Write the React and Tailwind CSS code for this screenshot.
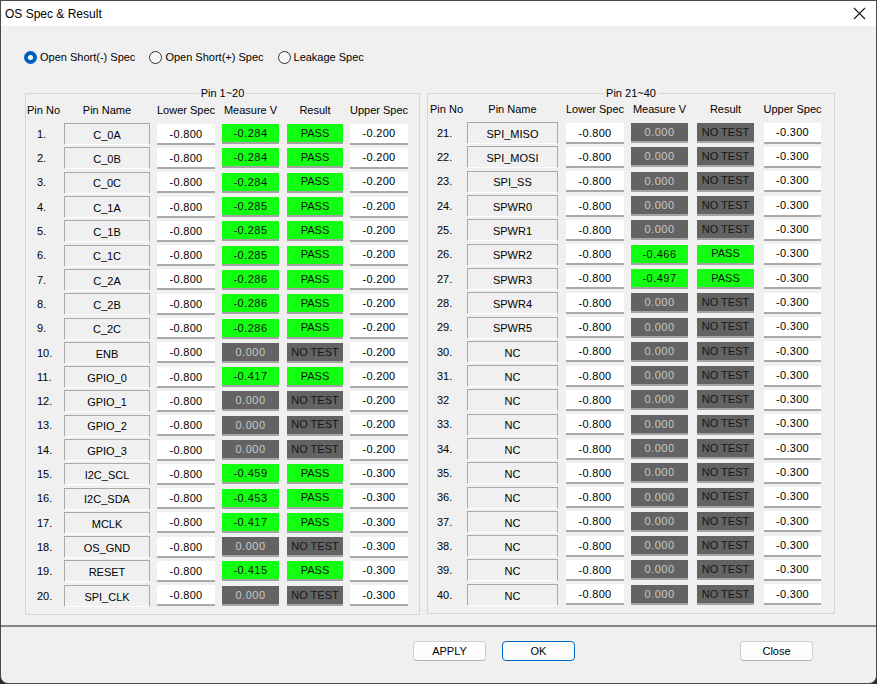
import React from "react";

const left = [
  ["1.", "C_0A", "-0.284", true, "-0.200"],
  ["2.", "C_0B", "-0.284", true, "-0.200"],
  ["3.", "C_0C", "-0.284", true, "-0.200"],
  ["4.", "C_1A", "-0.285", true, "-0.200"],
  ["5.", "C_1B", "-0.285", true, "-0.200"],
  ["6.", "C_1C", "-0.285", true, "-0.200"],
  ["7.", "C_2A", "-0.286", true, "-0.200"],
  ["8.", "C_2B", "-0.286", true, "-0.200"],
  ["9.", "C_2C", "-0.286", true, "-0.200"],
  ["10.", "ENB", "0.000", false, "-0.200"],
  ["11.", "GPIO_0", "-0.417", true, "-0.200"],
  ["12.", "GPIO_1", "0.000", false, "-0.200"],
  ["13.", "GPIO_2", "0.000", false, "-0.200"],
  ["14.", "GPIO_3", "0.000", false, "-0.200"],
  ["15.", "I2C_SCL", "-0.459", true, "-0.300"],
  ["16.", "I2C_SDA", "-0.453", true, "-0.300"],
  ["17.", "MCLK", "-0.417", true, "-0.300"],
  ["18.", "OS_GND", "0.000", false, "-0.300"],
  ["19.", "RESET", "-0.415", true, "-0.300"],
  ["20.", "SPI_CLK", "0.000", false, "-0.300"],
];

const right = [
  ["21.", "SPI_MISO", "0.000", false],
  ["22.", "SPI_MOSI", "0.000", false],
  ["23.", "SPI_SS", "0.000", false],
  ["24.", "SPWR0", "0.000", false],
  ["25.", "SPWR1", "0.000", false],
  ["26.", "SPWR2", "-0.466", true],
  ["27.", "SPWR3", "-0.497", true],
  ["28.", "SPWR4", "0.000", false],
  ["29.", "SPWR5", "0.000", false],
  ["30.", "NC", "0.000", false],
  ["31.", "NC", "0.000", false],
  ["32", "NC", "0.000", false],
  ["33.", "NC", "0.000", false],
  ["34.", "NC", "0.000", false],
  ["35.", "NC", "0.000", false],
  ["36.", "NC", "0.000", false],
  ["37.", "NC", "0.000", false],
  ["38.", "NC", "0.000", false],
  ["39.", "NC", "0.000", false],
  ["40.", "NC", "0.000", false],
].map((r) => [...r, "-0.300"]);

const leftCols = {
  headNo: "w-[38px] pl-px",
  no: "w-[38px] pl-[11px]",
  name: "w-[86px]",
  lower: "ml-[7px] w-[58px]",
  meas: "ml-[7px] w-[57px]",
  res: "ml-[8px] w-[56px]",
  upper: "ml-[7px] w-[58px]",
};

const rightCols = {
  headNo: "w-[39px] pl-[2px]",
  no: "w-[39px] pl-[9px]",
  name: "w-[91px]",
  lower: "ml-[8px] w-[58px]",
  meas: "ml-[7px] w-[57px]",
  res: "ml-[9px] w-[57px]",
  upper: "ml-[10px] w-[57px]",
};

function Radio({ checked, label }) {
  return (
    <div className="flex h-[14px] items-center">
      {checked ? (
        <span className="flex h-[13px] w-[13px] items-center justify-center rounded-full bg-[#0060c0]">
          <span className="h-[5px] w-[5px] rounded-full bg-white" />
        </span>
      ) : (
        <span className="h-[13px] w-[13px] rounded-full border border-[#333] bg-[#f8f8f8]" />
      )}
      <span className="ml-[3px] text-[11px] text-black">{label}</span>
    </div>
  );
}

function PinTable({ title, rows, cols, pt }) {
  return (
    <div className={`relative border border-[#d6d6d6] ${pt} pb-[6px]`}>
      <span className="absolute -top-[8px] left-0 right-0 flex justify-center">
        <span className="bg-[#f0f0f0] px-[2px] text-[11px] leading-[14px]">{title}</span>
      </span>
      <div className="flex h-[24px] items-center whitespace-nowrap text-[11px]">
        <div className={cols.headNo}>Pin No</div>
        <div className={`${cols.name} text-center`}>Pin Name</div>
        <div className={`${cols.lower} flex justify-center`}>Lower Spec</div>
        <div className={`${cols.meas} flex justify-center`}>Measure V</div>
        <div className={`${cols.res} flex justify-center`}>Result</div>
        <div className={`${cols.upper} flex justify-center`}>Upper Spec</div>
      </div>
      {rows.map(([no, name, meas, pass, upper]) => (
        <div key={no} className="flex h-[24.3px] items-center whitespace-nowrap text-[11px]">
          <div className={cols.no}>{no}</div>
          <div
            className={`${cols.name} flex h-[22px] items-center justify-center border border-[#a8a8a8] border-b-white bg-[#f0f0f0] pt-[2px]`}
          >
            {name}
          </div>
          <div className={`${cols.lower} flex h-[21px] items-start justify-center border-b-2 border-[#a9a9a9] bg-white pt-[2px] tracking-[0.3px]`}>
            -0.800
          </div>
          <div
            className={`${cols.meas} flex h-[20px] items-start justify-center border-b-2 border-[#a4a4a4] pt-[1px] tracking-[0.5px] ${
              pass ? "bg-[#12ff12] text-[#111]" : "bg-[#636363] text-[#c9c9c9]"
            }`}
          >
            {meas}
          </div>
          <div
            className={`${cols.res} flex h-[20px] items-center justify-center border-b-2 border-[#a4a4a4] ${
              pass ? "bg-[#12ff12] text-[#111]" : "bg-[#636363] text-[#161616]"
            }`}
          >
            {pass ? "PASS" : "NO TEST"}
          </div>
          <div className={`${cols.upper} flex h-[21px] items-center justify-center border-b-2 border-[#a9a9a9] bg-white tracking-[0.3px]`}>
            {upper}
          </div>
        </div>
      ))}
    </div>
  );
}

function Button({ label, primary }) {
  return (
    <button
      className={`flex h-[20px] w-[73px] items-center justify-center rounded-[4px] border bg-[#fdfdfd] text-[11px] text-black ${
        primary ? "border-[#0067c0]" : "border-[#d0d0d0] border-b-[#b5b5b5]"
      }`}
    >
      {label}
    </button>
  );
}

export default function App() {
  return (
    <div className="h-[684px] w-[877px] bg-[#2b2b2b]" style={{ fontFamily: '"Liberation Sans", Arial, sans-serif' }}>
      <div className="flex h-full w-full flex-col overflow-hidden rounded-b-[8px] border border-[#4a4a4a] bg-[#f0f0f0] text-black">
        {/* title bar */}
        <div className="flex h-[25px] items-center justify-between bg-white pl-[4px] pr-[10px]">
          <span className="text-[12px] leading-none">OS Spec &amp; Result</span>
          <svg width="13" height="13" viewBox="0 0 13 13" stroke="#1a1a1a" strokeWidth="1.1">
            <path d="M1 1L12 12M12 1L1 12" />
          </svg>
        </div>

        {/* radio selection */}
        <div className="flex h-[67px] items-start gap-[14px] pl-[23px] pt-[24px]">
          <Radio checked label="Open Short(-) Spec" />
          <Radio label="Open Short(+) Spec" />
          <Radio label="Leakage Spec" />
        </div>

        {/* tables */}
        <div className="flex gap-[7px] pl-[24px]">
          <div className="w-[395px]">
            <PinTable title="Pin 1~20" rows={left} cols={leftCols} pt="pt-[4px]" />
          </div>
          <div className="w-[408px]">
            <PinTable title="Pin 21~40" rows={right} cols={rightCols} pt="pt-[3px]" />
          </div>
        </div>

        {/* buttons */}
        <div className="mt-[10px] flex flex-1 items-start border-t-2 border-[#858585] pl-[412px] pt-[14px]">
          <Button label="APPLY" />
          <div className="ml-[16px]">
            <Button label="OK" primary />
          </div>
          <div className="ml-[165px]">
            <Button label="Close" />
          </div>
        </div>
      </div>
    </div>
  );
}
